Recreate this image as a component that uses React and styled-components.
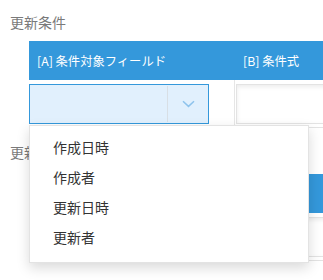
import React from "react";
import styled, { createGlobalStyle } from "styled-components";

const GlobalStyle = createGlobalStyle`
  body {
    margin: 0;
    background: #fff;
    font-family: "Noto Sans CJK JP", "Noto Sans", sans-serif;
    overflow: hidden;
  }
`;

const Page = styled.div`
  width: 323px;
  height: 280px;
  overflow: hidden;
  position: relative;
`;

const Section = styled.div`
  padding-top: ${(p) => p.top}px;
`;

const Label = styled.div`
  padding-left: 10px;
  font-size: 14px;
  line-height: 20px;
  color: #7a7a7a;
  margin-bottom: ${(p) => p.gap}px;
  white-space: nowrap;
`;

const Table = styled.div`
  margin-left: 29px;
  width: 520px;
`;

const HeaderRow = styled.div`
  display: grid;
  grid-template-columns: 205px 1fr;
  height: 39px;
  background: #3498db;
  color: #fff;
  font-size: 12.3px;
  align-items: center;
`;

const HeaderCell = styled.div`
  padding-left: ${(p) => (p.first ? 8 : 9)}px;
  white-space: nowrap;
`;

const Row = styled.div`
  display: grid;
  grid-template-columns: 205px 1fr;
  height: 48px;
  border-bottom: 1px solid #e3e3e3;
  box-sizing: border-box;
`;

const Cell = styled.div`
  position: relative;
  padding: 4px 0 4px ${(p) => (p.first ? 0 : 1)}px;
  border-left: ${(p) => (p.first ? "none" : "1px solid #e6e6e6")};
  box-sizing: border-box;
`;

const Select = styled.div`
  width: 180px;
  height: 40px;
  box-sizing: border-box;
  border: 1px solid #3498db;
  background: #e1f0fd;
  display: flex;
  justify-content: flex-end;
`;

const Arrow = styled.div`
  width: 40px;
  border-left: 1px solid #d8dfe5;
  display: flex;
  align-items: center;
  justify-content: center;
  margin: 1px 0;
`;

const Input = styled.div`
  height: 40px;
  box-sizing: border-box;
  border: 1px solid #e3e3e3;
  background: #fff;
  box-shadow: inset 0 2px 4px rgba(0, 0, 0, 0.08);
`;

const Menu = styled.ul`
  position: absolute;
  top: 125px;
  left: 29px;
  width: 280px;
  margin: 0;
  padding: 6px 0 10px;
  list-style: none;
  box-sizing: border-box;
  background: #fff;
  border: 1px solid #e3e3e3;
  box-shadow: 0 5px 12px rgba(0, 0, 0, 0.15);
  z-index: 10;
`;

const MenuItem = styled.li`
  height: 30px;
  line-height: 30px;
  padding: 0 23px;
  font-size: 14px;
  color: #333;
`;

function Chevron() {
  return (
    <svg width="13" height="8" viewBox="0 0 13 8">
      <path d="M1 1.2 L6.5 6.4 L12 1.2" fill="none" stroke="#8ec3ec" strokeWidth="1.5" />
    </svg>
  );
}

function ConditionTable({ dropdown }) {
  return (
    <Table>
      <HeaderRow>
        <HeaderCell first>[A] 条件対象フィールド</HeaderCell>
        <HeaderCell>[B] 条件式</HeaderCell>
      </HeaderRow>
      <Row>
        <Cell first>
          {dropdown ? (
            <Select>
              <Arrow>
                <Chevron />
              </Arrow>
            </Select>
          ) : (
            <Input style={{ width: 180 }} />
          )}
        </Cell>
        <Cell>
          <Input />
        </Cell>
      </Row>
    </Table>
  );
}

const fields = ["作成日時", "作成者", "更新日時", "更新者"];

export default function App() {
  return (
    <>
      <GlobalStyle />
      <Page>
        <Section top={12}>
          <Label gap={9}>更新条件</Label>
          <ConditionTable dropdown />
        </Section>
        <Section top={14}>
          <Label gap={12}>更新キー</Label>
          <ConditionTable />
        </Section>
        <Menu>
          {fields.map((f) => (
            <MenuItem key={f}>{f}</MenuItem>
          ))}
        </Menu>
      </Page>
    </>
  );
}
